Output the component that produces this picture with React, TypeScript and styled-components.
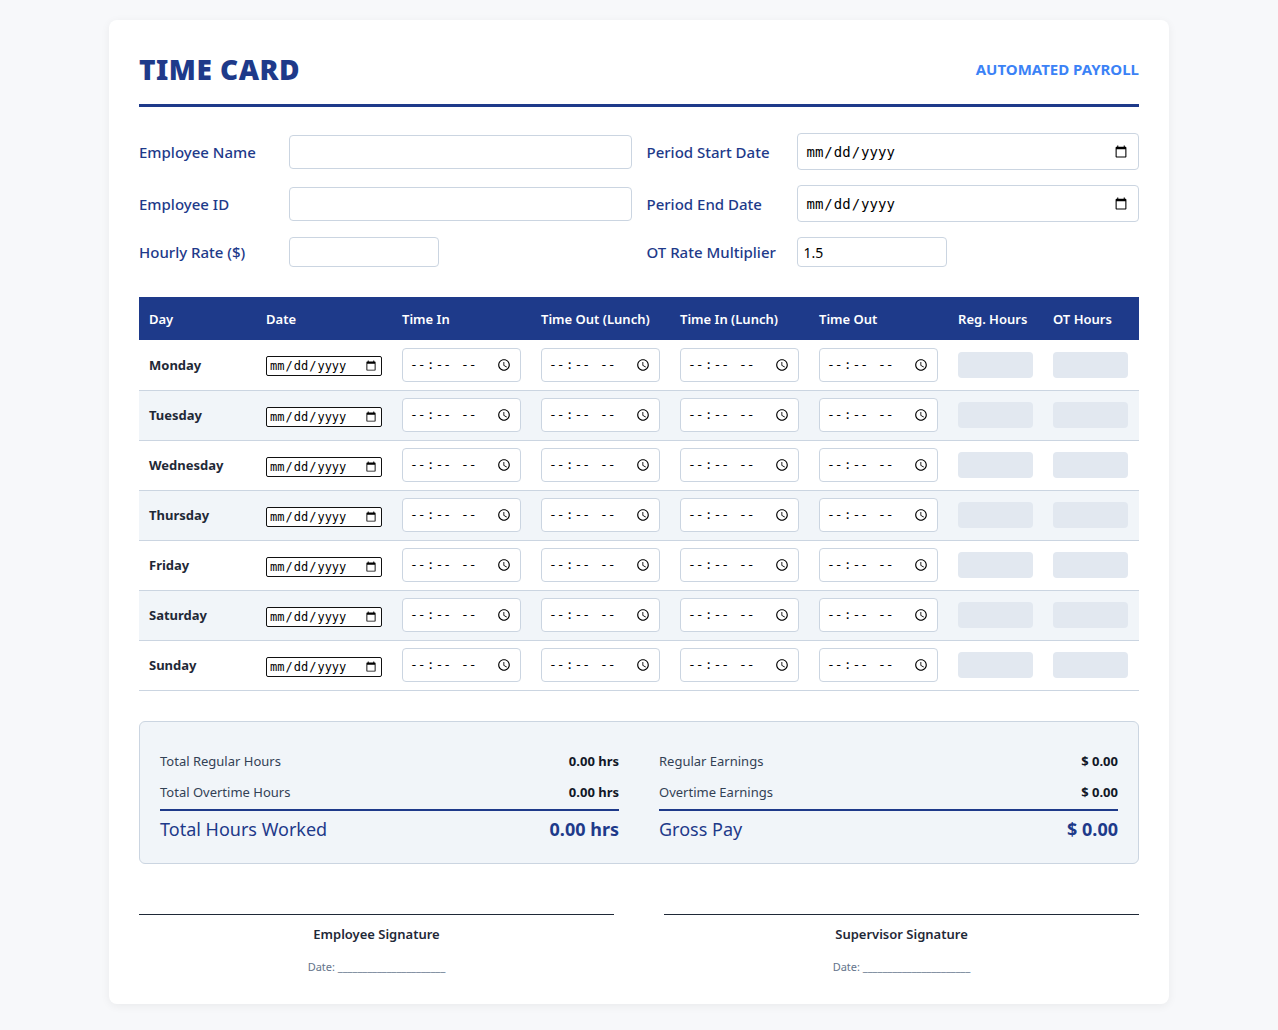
import React from "react";
import styled, { createGlobalStyle } from "styled-components";

const Global = createGlobalStyle`
  body { margin: 0; background: #f7f8fa; font-family: "Noto Sans", "Open Sans", sans-serif; }
`;

const Page = styled.div`
  padding: 20px 0;
  display: flex;
  justify-content: center;
`;

const Card = styled.div`
  width: 1000px;
  background: #fff;
  border-radius: 8px;
  box-shadow: 0 2px 10px rgba(0,0,0,0.06);
  padding: 30px 30px 30px;
`;

const Header = styled.div`
  display: flex;
  justify-content: space-between;
  align-items: center;
  border-bottom: 3px solid #1e3a8a;
  padding-bottom: 16px;
  margin-bottom: 26px;
`;

const Title = styled.h1`
  margin: 0;
  font-size: 28px;
  font-weight: 900;
  color: #1e3a8a;
  letter-spacing: 0.5px;
`;

const Tag = styled.div`
  color: #3b82f6;
  font-weight: 700;
  font-size: 15px;
`;

const FormGrid = styled.div`
  display: grid;
  grid-template-columns: 1fr 1fr;
  column-gap: 15px;
  row-gap: 15px;
  margin-bottom: 30px;
`;

const Field = styled.div`
  display: flex;
  align-items: center;
`;

const Label = styled.label`
  width: 150px;
  flex-shrink: 0;
  color: #1e3a8a;
  font-size: 15px;
  font-weight: 500;
`;

const TextInput = styled.input<{ $w?: number }>`
  width: ${(p) => (p.$w ? `${p.$w}px` : "100%")};
  box-sizing: border-box;
  height: ${(p) => (p.$w ? 30 : 34)}px;
  border: 1px solid #cbd5e1;
  border-radius: 4px;
  padding: 0 6px;
  font-size: 14px;
  font-family: inherit;
  background: #fff;
`;

const DateInput = styled.input`
  width: 100%;
  box-sizing: border-box;
  height: 37px;
  border: 1px solid #cbd5e1;
  border-radius: 4px;
  padding: 0 8px;
  font-size: 14px;
  background: #fff;
`;

const Table = styled.table`
  width: 100%;
  border-collapse: collapse;
`;

const Th = styled.th<{ $w: number }>`
  width: ${(p) => p.$w}px;
  background: #1e3a8a;
  color: #fff;
  font-size: 13px;
  font-weight: 600;
  text-align: left;
  height: 43px;
  padding: 0 10px;
  box-sizing: border-box;
`;

const Tr = styled.tr<{ $alt: boolean }>`
  background: ${(p) => (p.$alt ? "#f1f5f9" : "#fff")};
  border-bottom: 1px solid #cbd5e1;
`;

const Td = styled.td`
  height: 50px;
  padding: 0 10px;
  box-sizing: border-box;
`;

const DayName = styled(Td)`
  font-weight: 700;
  font-size: 13px;
  color: #1f2937;
`;

const SmallDate = styled.input`
  width: 116px;
  height: 20px;
  box-sizing: border-box;
  font-size: 12px;
  padding: 0 2px;
  border: 1px solid #111;
  border-radius: 2px;
`;

const TimeInput = styled.input`
  width: 119px;
  height: 34px;
  box-sizing: border-box;
  border: 1px solid #cbd5e1;
  border-radius: 4px;
  padding: 0 6px;
  font-size: 13px;
  background: #fff;
`;

const Readout = styled.div`
  width: 75px;
  height: 26px;
  border-radius: 4px;
  background: #e2e8f0;
`;

const Summary = styled.div`
  margin-top: 30px;
  background: #f1f5f9;
  border: 1px solid #cbd5e1;
  border-radius: 6px;
  padding: 24px 20px 22px;
  display: grid;
  grid-template-columns: 1fr 1fr;
  column-gap: 40px;
`;

const SumCol = styled.div`
  display: flex;
  flex-direction: column;
`;

const SumRow = styled.div`
  display: flex;
  justify-content: space-between;
  align-items: center;
  font-size: 13px;
  color: #334155;
  height: 31px;
`;

const SumVal = styled.span`
  font-weight: 700;
  color: #111827;
`;

const TotalRow = styled.div`
  display: flex;
  justify-content: space-between;
  align-items: center;
  border-top: 2px solid #1e3a8a;
  margin-top: 1px;
  padding-top: 6px;
  font-size: 18px;
  color: #1e3a8a;
`;

const TotalVal = styled.span`
  font-weight: 700;
`;

const Sigs = styled.div`
  margin-top: 50px;
  display: grid;
  grid-template-columns: 1fr 1fr;
  column-gap: 50px;
`;

const Sig = styled.div`
  border-top: 1px solid #1f2937;
  text-align: center;
  padding-top: 10px;
`;

const SigTitle = styled.div`
  font-size: 13px;
  font-weight: 600;
  color: #1f2937;
`;

const SigDate = styled.div`
  margin-top: 16px;
  font-size: 11px;
  color: #64748b;
`;

const days = ["Monday", "Tuesday", "Wednesday", "Thursday", "Friday", "Saturday", "Sunday"];
const cols: [string, number][] = [
  ["Day", 118], ["Date", 136], ["Time In", 139], ["Time Out (Lunch)", 138],
  ["Time In (Lunch)", 139], ["Time Out", 139], ["Reg. Hours", 95], ["OT Hours", 96],
];

export default function App() {
  return (
    <>
      <Global />
      <Page>
        <Card>
          <Header>
            <Title>TIME CARD</Title>
            <Tag>AUTOMATED PAYROLL</Tag>
          </Header>
          <FormGrid>
            <Field><Label>Employee Name</Label><TextInput /></Field>
            <Field><Label>Period Start Date</Label><DateInput type="date" /></Field>
            <Field><Label>Employee ID</Label><TextInput /></Field>
            <Field><Label>Period End Date</Label><DateInput type="date" /></Field>
            <Field><Label>Hourly Rate ($)</Label><TextInput $w={150} /></Field>
            <Field><Label>OT Rate Multiplier</Label><TextInput $w={150} defaultValue="1.5" /></Field>
          </FormGrid>
          <Table>
            <thead>
              <tr>{cols.map(([c, w]) => <Th key={c} $w={w}>{c}</Th>)}</tr>
            </thead>
            <tbody>
              {days.map((d, i) => (
                <Tr key={d} $alt={i % 2 === 1}>
                  <DayName>{d}</DayName>
                  <Td><SmallDate type="date" /></Td>
                  <Td><TimeInput type="time" /></Td>
                  <Td><TimeInput type="time" /></Td>
                  <Td><TimeInput type="time" /></Td>
                  <Td><TimeInput type="time" /></Td>
                  <Td><Readout /></Td>
                  <Td><Readout /></Td>
                </Tr>
              ))}
            </tbody>
          </Table>
          <Summary>
            <SumCol>
              <SumRow><span>Total Regular Hours</span><SumVal>0.00 hrs</SumVal></SumRow>
              <SumRow><span>Total Overtime Hours</span><SumVal>0.00 hrs</SumVal></SumRow>
              <TotalRow><span>Total Hours Worked</span><TotalVal>0.00 hrs</TotalVal></TotalRow>
            </SumCol>
            <SumCol>
              <SumRow><span>Regular Earnings</span><SumVal>$ 0.00</SumVal></SumRow>
              <SumRow><span>Overtime Earnings</span><SumVal>$ 0.00</SumVal></SumRow>
              <TotalRow><span>Gross Pay</span><TotalVal>$ 0.00</TotalVal></TotalRow>
            </SumCol>
          </Summary>
          <Sigs>
            <Sig>
              <SigTitle>Employee Signature</SigTitle>
              <SigDate>Date: ______________________</SigDate>
            </Sig>
            <Sig>
              <SigTitle>Supervisor Signature</SigTitle>
              <SigDate>Date: ______________________</SigDate>
            </Sig>
          </Sigs>
        </Card>
      </Page>
    </>
  );
}
